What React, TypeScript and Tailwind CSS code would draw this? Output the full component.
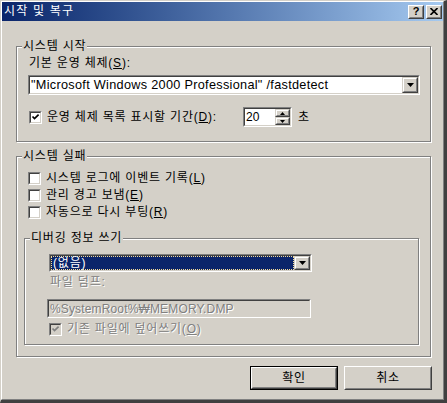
import type { ReactNode } from 'react';

const FACE = 'bg-[#d4d0c8]';

function Sunken({ className = '', inner = 'bg-white', children }: { className?: string; inner?: string; children?: ReactNode }) {
  return (
    <div className={`border border-t-[#808080] border-l-[#808080] border-b-white border-r-white ${className}`}>
      <div className={`w-full h-full border border-t-[#404040] border-l-[#404040] border-b-[#d4d0c8] border-r-[#d4d0c8] ${inner}`}>
        {children}
      </div>
    </div>
  );
}

function Raised({ className = '', children }: { className?: string; children?: ReactNode }) {
  return (
    <div className={`border border-t-[#d4d0c8] border-l-[#d4d0c8] border-b-[#404040] border-r-[#404040] ${FACE} ${className}`}>
      <div className="w-full h-full border border-t-white border-l-white border-b-[#808080] border-r-[#808080] flex items-center justify-center">
        {children}
      </div>
    </div>
  );
}

function DownArrow() {
  return (
    <svg width="7" height="4" viewBox="0 0 7 4">
      <polygon points="0,0 7,0 3.5,4" fill="#000" />
    </svg>
  );
}

function Check({ disabled }: { disabled?: boolean }) {
  return (
    <Sunken className="w-[13px] h-[13px] shrink-0" inner={disabled ? 'bg-[#d4d0c8]' : 'bg-white'}>
      <svg width="9" height="9" viewBox="0 0 9 9" className="block">
        <path d="M1.5 3.5 L3.5 5.6 L7.6 1.6" stroke={disabled ? '#808080' : '#000'} strokeWidth="1.7" fill="none" />
      </svg>
    </Sunken>
  );
}

function Box() {
  return <Sunken className="w-[13px] h-[13px] shrink-0" />;
}

function Group({ label, className = '', children }: { label: string; className?: string; children?: ReactNode }) {
  return (
    <div className={`relative border border-[#808080] shadow-[inset_1px_1px_0_#fff,1px_1px_0_#fff] ${className}`}>
      <span className="absolute top-[-7px] left-[5px] px-[1px] bg-[#d4d0c8] h-[13px] leading-[13px] whitespace-nowrap">{label}</span>
      {children}
    </div>
  );
}

const dim = 'text-[#808080] [text-shadow:1px_1px_0_#fff]';

export default function App() {
  return (
    <div className="w-[447px] h-[403px] bg-[#d4d0c8] border-l border-t border-l-[#d4d0c8] border-t-[#d4d0c8] border-r-[3px] border-b-[3px] border-r-[#404040] border-b-[#404040] text-[12px] tracking-[0.8px] text-black font-['Liberation_Sans','Noto_Sans_CJK_KR',sans-serif]">
      <div className="w-full h-full flex flex-col border border-l-white border-t-white border-r-[#808080] border-b-[#808080]">
        {/* title bar */}
        <div className="h-[19px] shrink-0 flex items-center bg-linear-to-r from-[#0a246a] to-[#a6caf0] pl-[2px] pr-[1px]">
          <span className="flex-1 text-white leading-[13px] tracking-[1.2px]">시작 및 복구</span>
          <div className="w-[16px] h-[14px] border border-t-white border-l-white border-b-[#404040] border-r-[#404040] bg-[#d4d0c8]">
            <div className="w-full h-full border border-t-[#d4d0c8] border-l-[#d4d0c8] border-b-[#808080] border-r-[#808080] flex items-center justify-center font-bold text-[11px] tracking-normal leading-none font-['Liberation_Sans',sans-serif]">
              ?
            </div>
          </div>
          <div className="ml-[2px] w-[16px] h-[14px] border border-t-white border-l-white border-b-[#404040] border-r-[#404040] bg-[#d4d0c8]">
            <div className="w-full h-full border border-t-[#d4d0c8] border-l-[#d4d0c8] border-b-[#808080] border-r-[#808080] flex items-center justify-center">
              <svg width="8" height="7" viewBox="0 0 8 7">
                <path d="M0.5 0 L7.5 7 M7.5 0 L0.5 7" stroke="#000" strokeWidth="1.6" />
              </svg>
            </div>
          </div>
        </div>

        <div className="flex flex-col pl-[14px]">
          {/* 시스템 시작 */}
          <Group label="시스템 시작" className="mt-[25px] w-[415px] h-[96px]">
            <div className="mt-[10px] ml-[12px] h-[13px] leading-[13px]">
              기본 운영 체제(<u>S</u>):
            </div>
            <Sunken className="mt-[5px] ml-[11px] w-[392px] h-[20px]" inner="bg-white flex items-center">
              <span className="flex-1 pl-[1px] text-[12.7px] tracking-[0.3px] leading-[14px] whitespace-nowrap">"Microsoft Windows 2000 Professional" /fastdetect</span>
              <Raised className="w-[16px] h-[16px]">
                <DownArrow />
              </Raised>
            </Sunken>
            <div className="mt-[12px] ml-[12px] h-[20px] flex items-center">
              <Check />
              <span className="ml-[5px] w-[196px] leading-[13px] whitespace-nowrap">
                운영 체제 목록 표시할 기간(<u>D</u>):
              </span>
              <Sunken className="w-[49px] h-[20px]" inner="bg-white flex">
                <span className="flex-1 pl-[1px] leading-[16px] tracking-normal">20</span>
                <div className="w-[15px] flex flex-col">
                  <Raised className="h-[8px]">
                    <svg width="5" height="3" viewBox="0 0 5 3"><polygon points="2.5,0 5,3 0,3" fill="#000" /></svg>
                  </Raised>
                  <Raised className="h-[8px]">
                    <svg width="5" height="3" viewBox="0 0 5 3"><polygon points="0,0 5,0 2.5,3" fill="#000" /></svg>
                  </Raised>
                </div>
              </Sunken>
              <span className="ml-[6px] leading-[13px]">초</span>
            </div>
          </Group>

          {/* 시스템 실패 */}
          <Group label="시스템 실패" className="mt-[14px] w-[415px] h-[201px]">
            <div className="mt-[13px] flex flex-col">
              <div className="h-[17px] pl-[11px] flex items-center">
                <Box />
                <span className="ml-[5px] leading-[13px]">시스템 로그에 이벤트 기록(<u>L</u>)</span>
              </div>
              <div className="h-[17px] pl-[11px] flex items-center">
                <Box />
                <span className="ml-[5px] leading-[13px]">관리 경고 보냄(<u>E</u>)</span>
              </div>
              <div className="h-[17px] pl-[11px] flex items-center">
                <Box />
                <span className="ml-[5px] leading-[13px]">자동으로 다시 부팅(<u>R</u>)</span>
              </div>
            </div>

            <Group label="디버깅 정보 쓰기" className="mt-[17px] ml-[7px] w-[395px] h-[107px]">
              <Sunken className="mt-[15px] ml-[24px] w-[263px] h-[18px]" inner="bg-white flex">
                <div className="flex-1 bg-[#0a246a] border border-dotted border-[#f5db95] text-white pl-[1px] leading-[12px]">
                  (없음)
                </div>
                <Raised className="w-[16px] h-[14px]">
                  <DownArrow />
                </Raised>
              </Sunken>
              <div className={`mt-[4px] ml-[25px] h-[13px] leading-[13px] ${dim}`}>파일 덤프:</div>
              <Sunken className="mt-[10px] ml-[22px] w-[264px] h-[19px]" inner="bg-[#d4d0c8] flex items-center">
                <span className={`pl-[1px] leading-[14px] tracking-[0.15px] whitespace-nowrap ${dim}`}>%SystemRoot%₩MEMORY.DMP</span>
              </Sunken>
              <div className="mt-[3px] ml-[24px] h-[17px] flex items-center">
                <Check disabled />
                <span className={`ml-[5px] leading-[13px] ${dim}`}>
                  기존 파일에 덮어쓰기(<u>O</u>)
                </span>
              </div>
            </Group>
          </Group>
        </div>

        {/* buttons */}
        <div className="mt-[9px] flex justify-end gap-[6px] pr-[11px]">
          <div className="w-[88px] h-[24px] border border-black">
            <div className="w-full h-full border border-t-white border-l-white border-b-[#404040] border-r-[#404040]">
              <div className="w-full h-full border border-t-[#d4d0c8] border-l-[#d4d0c8] border-b-[#808080] border-r-[#808080] flex items-center justify-center leading-[13px]">
                확인
              </div>
            </div>
          </div>
          <div className="w-[88px] h-[24px] border border-t-white border-l-white border-b-[#404040] border-r-[#404040]">
            <div className="w-full h-full border border-t-[#d4d0c8] border-l-[#d4d0c8] border-b-[#808080] border-r-[#808080] flex items-center justify-center leading-[13px]">
              취소
            </div>
          </div>
        </div>
      </div>
    </div>
  );
}
